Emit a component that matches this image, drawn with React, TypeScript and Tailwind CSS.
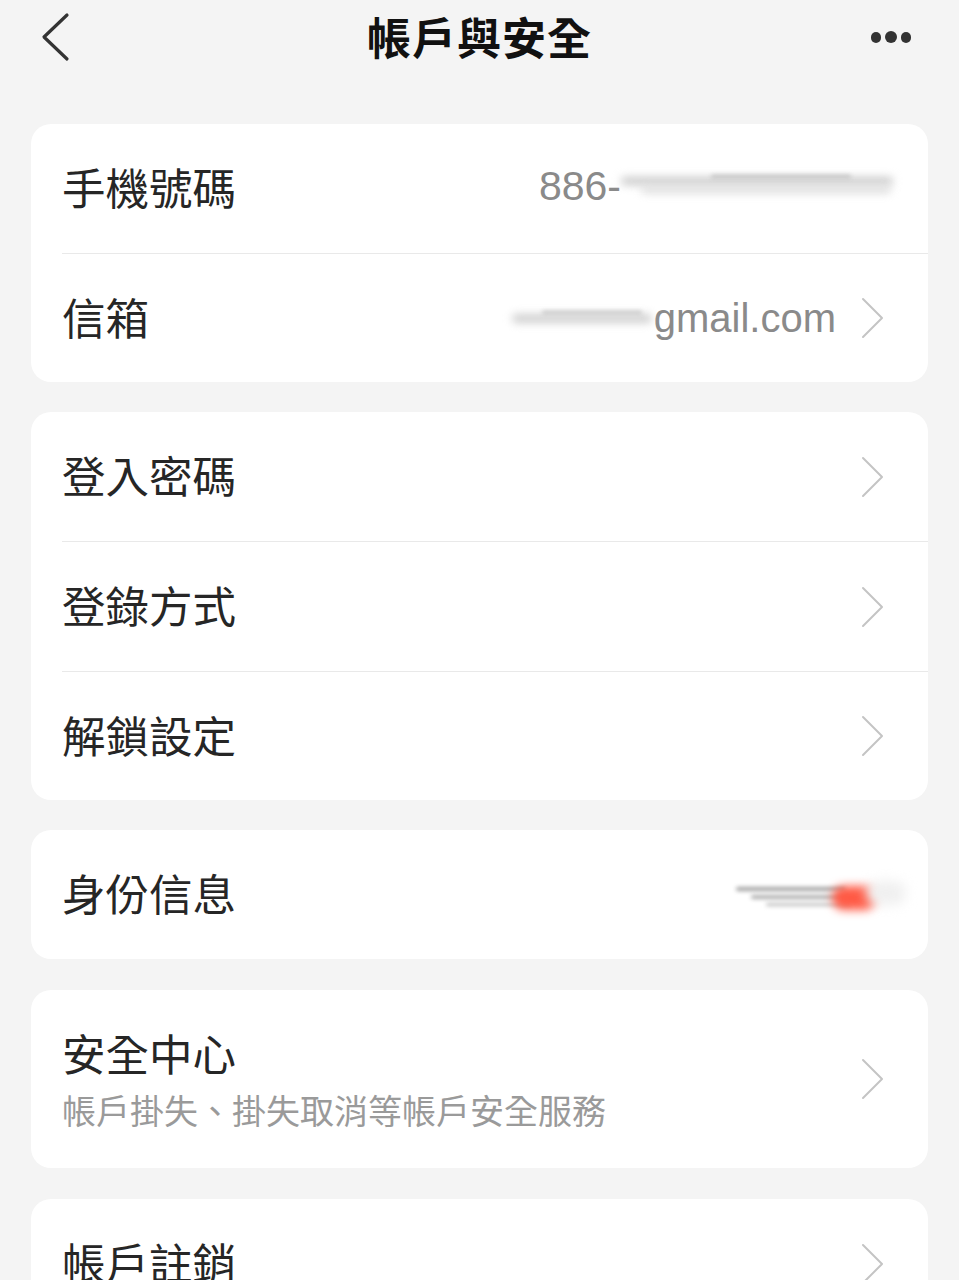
import React from "react";

const FONT = { fontFamily: '"Noto Sans CJK TC", "Noto Sans", sans-serif' };
const LAT = { fontFamily: '"Liberation Sans", Arial, sans-serif' };

function Chevron() {
  return (
    <svg width="26" height="44" viewBox="0 0 26 44" className="shrink-0">
      <polyline points="3,3 22,22 3,41" fill="none" stroke="#c4c4c4" strokeWidth="2" strokeLinecap="round" strokeLinejoin="round" />
    </svg>
  );
}

function Row({ label, right, chevron = true, last = false }: { label: string; right?: React.ReactNode; chevron?: boolean; last?: boolean }) {
  return (
    <div className={`flex items-center pl-[31px] pr-[42px] ${last ? "h-[128px]" : "h-[129px]"}`}>
      <div className="-mt-[3px] text-[43.5px] leading-none text-[#262626]">{label}</div>
      <div className="ml-auto flex items-center">
        {right}
        {chevron && <Chevron />}
      </div>
    </div>
  );
}

function Divider() {
  return <div className="ml-[31px] h-px bg-[#e9e9e9]" />;
}

function Card({ children, extra = "" }: { children: React.ReactNode; extra?: string }) {
  return <div className={`overflow-hidden rounded-[20px] bg-white ${extra}`}>{children}</div>;
}

export default function App() {
  return (
    <div className="min-h-[1280px] w-[959px] overflow-hidden bg-[#f4f4f4]" style={FONT}>
      {/* header */}
      <div className="relative flex h-[76px] items-center justify-center">
        <svg width="30" height="50" viewBox="0 0 30 50" className="absolute left-[40px] top-[12px]">
          <polyline points="27,3 4,25 27,47" fill="none" stroke="#333" strokeWidth="3.2" strokeLinecap="round" strokeLinejoin="round" />
        </svg>
        <div className="-mt-[4px] text-[44px] font-bold leading-none tracking-[1px] text-[#111]">帳戶與安全</div>
        <div className="absolute left-[871px] top-[31px] flex items-center gap-[4px]">
          <span className="h-[11px] w-[10px] rounded-full bg-[#333]" />
          <span className="h-[12px] w-[12px] rounded-full bg-[#333]" />
          <span className="h-[11px] w-[10px] rounded-full bg-[#333]" />
        </div>
      </div>

      <div className="mt-[48px] flex flex-col gap-[30px] px-[31px]">
        <Card>
          <Row
            label="手機號碼"
            chevron={false}
            right={
              <div className="mr-[-10px] -mt-[4px] flex items-center">
                <span className="text-[41px] leading-none text-[#8a8a8a]" style={LAT}>886-</span>
                <div className="relative h-[44px] w-[275px]">
                  <div className="absolute left-[0px] top-[12px] h-[8px] w-[272px] rounded-full bg-[#cacaca] blur-[4px]" />
                  <div className="absolute left-[20px] top-[22px] h-[6px] w-[250px] rounded-full bg-[#d8d8d8] blur-[4px]" />
                  <div className="absolute left-[90px] top-[10px] h-[3px] w-[140px] rounded-full bg-[#bdbdbd] blur-[2px]" />
                </div>
              </div>
            }
          />
          <Divider />
          <Row
            label="信箱"
            last
            right={
              <div className="mr-[24px] flex items-center">
                <div className="relative h-[44px] w-[152px]">
                  <div className="absolute left-[10px] top-[18px] h-[9px] w-[140px] rounded-full bg-[#cfcfcf] blur-[4px]" />
                  <div className="absolute left-[40px] top-[15px] h-[3px] w-[100px] rounded-full bg-[#c0c0c0] blur-[2px]" />
                </div>
                <span className="text-[40px] leading-none text-[#8a8a8a]" style={LAT}>gmail.com</span>
              </div>
            }
          />
        </Card>

        <Card>
          <Row label="登入密碼" />
          <Divider />
          <Row label="登錄方式" />
          <Divider />
          <Row label="解鎖設定" last />
        </Card>

        <Card>
          <Row
            label="身份信息"
            chevron={false}
            right={
              <div className="relative mr-[-20px] h-[60px] w-[170px]">
                <div className="absolute left-[0px] top-[22px] h-[4px] w-[110px] rounded-full bg-[#a0a0a0] blur-[2px]" />
                <div className="absolute left-[15px] top-[30px] h-[4px] w-[100px] rounded-full bg-[#acacac] blur-[2px]" />
                <div className="absolute left-[30px] top-[38px] h-[3px] w-[85px] rounded-full bg-[#bcbcbc] blur-[2px]" />
                <div className="absolute left-[96px] top-[21px] h-[24px] w-[44px] rounded-full bg-[#ff5a45] blur-[5px]" />
                <div className="absolute left-[130px] top-[16px] h-[24px] w-[40px] rounded-full bg-[#f0f0f0] blur-[6px]" />
              </div>
            }
          />
        </Card>

        <Card extra="mt-[1px]">
          <div className="flex h-[178px] items-center pl-[31px] pr-[42px]">
            <div className="flex flex-col">
              <div className="text-[43.5px] leading-none text-[#262626]">安全中心</div>
              <div className="mt-[19px] text-[34px] leading-none text-[#9a9a9a]">帳戶掛失、掛失取消等帳戶安全服務</div>
            </div>
            <div className="ml-auto">
              <Chevron />
            </div>
          </div>
        </Card>

        <Card extra="mt-[1px]">
          <Row label="帳戶註銷" />
        </Card>
      </div>
    </div>
  );
}
